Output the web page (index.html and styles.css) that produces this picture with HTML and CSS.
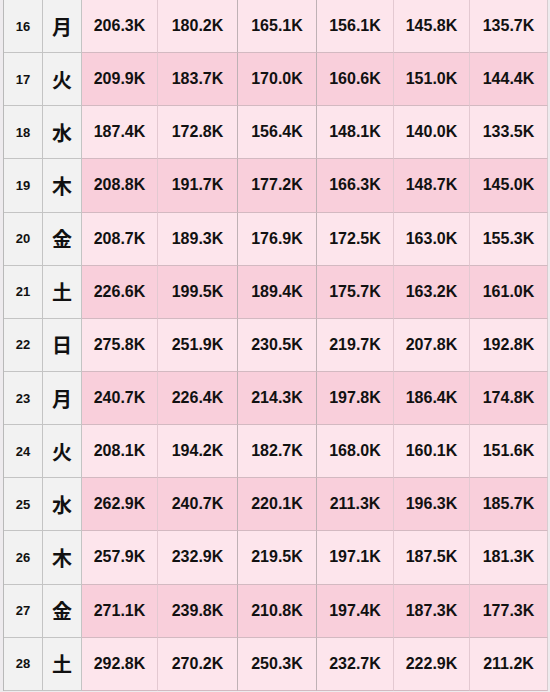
FILE: index.html
```html
<!DOCTYPE html>
<html lang="ja">
<head>
<meta charset="utf-8">
<link rel="stylesheet" href="styles.css">
</head>
<body>
<div class="sheet">
  <div class="row light"><div class="c day">16</div><div class="c wd">月</div><div class="c v">206.3K</div><div class="c v">180.2K</div><div class="c v">165.1K</div><div class="c v">156.1K</div><div class="c v">145.8K</div><div class="c v">135.7K</div></div>
  <div class="row dark"><div class="c day">17</div><div class="c wd">火</div><div class="c v">209.9K</div><div class="c v">183.7K</div><div class="c v">170.0K</div><div class="c v">160.6K</div><div class="c v">151.0K</div><div class="c v">144.4K</div></div>
  <div class="row light"><div class="c day">18</div><div class="c wd">水</div><div class="c v">187.4K</div><div class="c v">172.8K</div><div class="c v">156.4K</div><div class="c v">148.1K</div><div class="c v">140.0K</div><div class="c v">133.5K</div></div>
  <div class="row dark"><div class="c day">19</div><div class="c wd">木</div><div class="c v">208.8K</div><div class="c v">191.7K</div><div class="c v">177.2K</div><div class="c v">166.3K</div><div class="c v">148.7K</div><div class="c v">145.0K</div></div>
  <div class="row light"><div class="c day">20</div><div class="c wd">金</div><div class="c v">208.7K</div><div class="c v">189.3K</div><div class="c v">176.9K</div><div class="c v">172.5K</div><div class="c v">163.0K</div><div class="c v">155.3K</div></div>
  <div class="row dark"><div class="c day">21</div><div class="c wd">土</div><div class="c v">226.6K</div><div class="c v">199.5K</div><div class="c v">189.4K</div><div class="c v">175.7K</div><div class="c v">163.2K</div><div class="c v">161.0K</div></div>
  <div class="row light"><div class="c day">22</div><div class="c wd">日</div><div class="c v">275.8K</div><div class="c v">251.9K</div><div class="c v">230.5K</div><div class="c v">219.7K</div><div class="c v">207.8K</div><div class="c v">192.8K</div></div>
  <div class="row dark"><div class="c day">23</div><div class="c wd">月</div><div class="c v">240.7K</div><div class="c v">226.4K</div><div class="c v">214.3K</div><div class="c v">197.8K</div><div class="c v">186.4K</div><div class="c v">174.8K</div></div>
  <div class="row light"><div class="c day">24</div><div class="c wd">火</div><div class="c v">208.1K</div><div class="c v">194.2K</div><div class="c v">182.7K</div><div class="c v">168.0K</div><div class="c v">160.1K</div><div class="c v">151.6K</div></div>
  <div class="row dark"><div class="c day">25</div><div class="c wd">水</div><div class="c v">262.9K</div><div class="c v">240.7K</div><div class="c v">220.1K</div><div class="c v">211.3K</div><div class="c v">196.3K</div><div class="c v">185.7K</div></div>
  <div class="row light"><div class="c day">26</div><div class="c wd">木</div><div class="c v">257.9K</div><div class="c v">232.9K</div><div class="c v">219.5K</div><div class="c v">197.1K</div><div class="c v">187.5K</div><div class="c v">181.3K</div></div>
  <div class="row dark"><div class="c day">27</div><div class="c wd">金</div><div class="c v">271.1K</div><div class="c v">239.8K</div><div class="c v">210.8K</div><div class="c v">197.4K</div><div class="c v">187.3K</div><div class="c v">177.3K</div></div>
  <div class="row light"><div class="c day">28</div><div class="c wd">土</div><div class="c v">292.8K</div><div class="c v">270.2K</div><div class="c v">250.3K</div><div class="c v">232.7K</div><div class="c v">222.9K</div><div class="c v">211.2K</div></div>
</div>
</body>
</html>
```

FILE: styles.css
```css
html, body {
  margin: 0;
  padding: 0;
  background: #eeebee;
  overflow: hidden;
}

.sheet {
  margin-left: 3px;
  width: 544px;
  border-left: 1px solid #b9b9b9;
  display: grid;
  grid-auto-rows: 53.15px;
  font-family: "Liberation Sans", Arial, sans-serif;
  font-weight: bold;
  color: #111;
}

.row {
  display: grid;
  grid-template-columns: 39px 39px 76px 80px 79px 77px 76px 78px;
}

.c {
  box-sizing: border-box;
  display: flex;
  align-items: center;
  justify-content: center;
  border-right: 1px solid #e3c9d1;
  border-bottom: 1px solid #d3b9c1;
}

.day {
  background: #f2f2f2;
  font-size: 13px;
  border-right-color: #c4c4c4;
  border-bottom-color: #c4c4c4;
}

.wd {
  background: #f2f2f2;
  font-family: "Noto Sans CJK JP", "Noto Sans", sans-serif;
  font-size: 20px;
  border-right-color: #c4c4c4;
  border-bottom-color: #c4c4c4;
}

.v {
  font-size: 16px;
}

.light .v { background: #fde5ec; }
.dark .v { background: #f9cfdb; }

.v:nth-child(4),
.v:nth-child(5) {
  border-right-color: #bfb1b5;
}

.v:nth-child(8) {
  border-right-color: #d8ccd0;
}
```
